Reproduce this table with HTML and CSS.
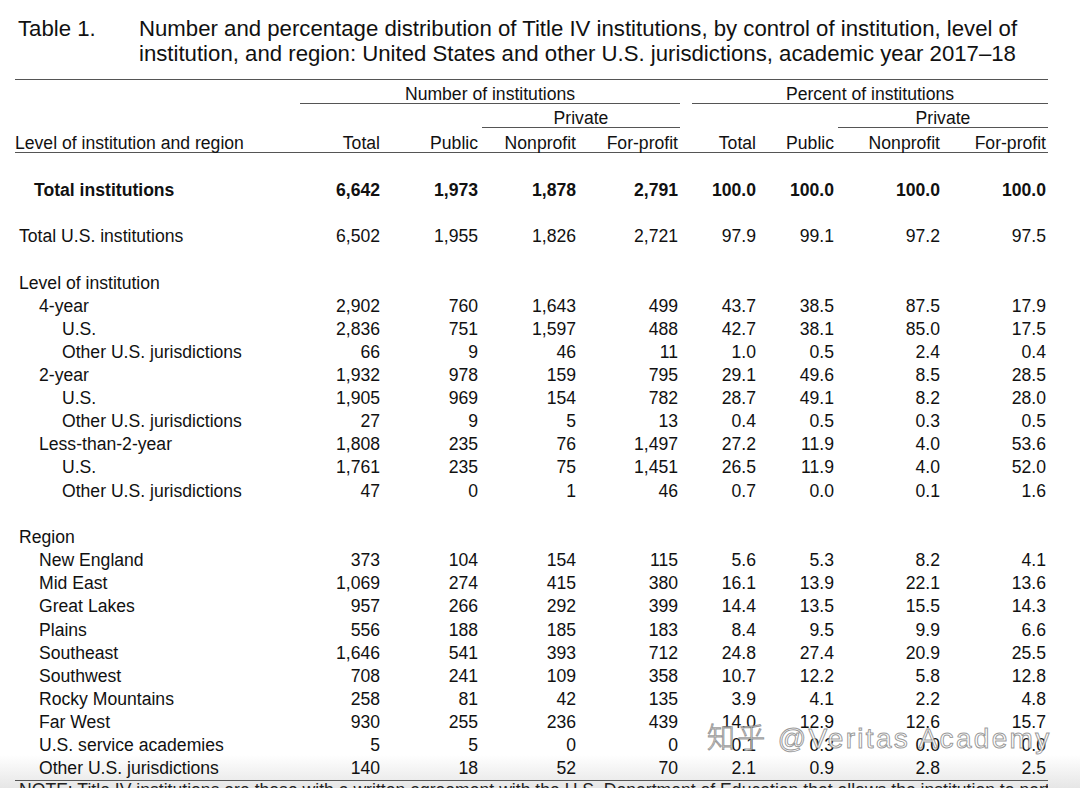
FILE: index.html
```html
<!DOCTYPE html>
<html lang="en">
<head>
<meta charset="utf-8">
<title>Table 1</title>
<link rel="stylesheet" href="styles.css">
</head>
<body>
<div class="page">
  <div class="title">
    <div class="title-num">Table 1.</div>
    <div class="title-text">Number and percentage distribution of Title IV institutions, by control of institution, level of institution, and region: United States and other U.S. jurisdictions, academic year 2017–18</div>
  </div>

  <div class="table">
    <div class="head">
      <div class="span span-num">Number of institutions</div>
      <div class="span span-pct">Percent of institutions</div>
      <div class="span span-priv1">Private</div>
      <div class="span span-priv2">Private</div>
      <div class="hl hl-label">Level of institution and region</div>
      <div class="hl">Total</div>
      <div class="hl">Public</div>
      <div class="hl">Nonprofit</div>
      <div class="hl">For-profit</div>
      <div class="hl">Total</div>
      <div class="hl">Public</div>
      <div class="hl">Nonprofit</div>
      <div class="hl">For-profit</div>
    </div>

    <div class="body">
      <div class="row bold first"><div class="lbl in-bold">Total institutions</div><div>6,642</div><div>1,973</div><div>1,878</div><div>2,791</div><div>100.0</div><div>100.0</div><div>100.0</div><div>100.0</div></div>
      <div class="row gap"><div class="lbl in-0">Total U.S. institutions</div><div>6,502</div><div>1,955</div><div>1,826</div><div>2,721</div><div>97.9</div><div>99.1</div><div>97.2</div><div>97.5</div></div>

      <div class="row gap"><div class="lbl in-0">Level of institution</div></div>
      <div class="row"><div class="lbl in-1">4-year</div><div>2,902</div><div>760</div><div>1,643</div><div>499</div><div>43.7</div><div>38.5</div><div>87.5</div><div>17.9</div></div>
      <div class="row"><div class="lbl in-2">U.S.</div><div>2,836</div><div>751</div><div>1,597</div><div>488</div><div>42.7</div><div>38.1</div><div>85.0</div><div>17.5</div></div>
      <div class="row"><div class="lbl in-2">Other U.S. jurisdictions</div><div>66</div><div>9</div><div>46</div><div>11</div><div>1.0</div><div>0.5</div><div>2.4</div><div>0.4</div></div>
      <div class="row"><div class="lbl in-1">2-year</div><div>1,932</div><div>978</div><div>159</div><div>795</div><div>29.1</div><div>49.6</div><div>8.5</div><div>28.5</div></div>
      <div class="row"><div class="lbl in-2">U.S.</div><div>1,905</div><div>969</div><div>154</div><div>782</div><div>28.7</div><div>49.1</div><div>8.2</div><div>28.0</div></div>
      <div class="row"><div class="lbl in-2">Other U.S. jurisdictions</div><div>27</div><div>9</div><div>5</div><div>13</div><div>0.4</div><div>0.5</div><div>0.3</div><div>0.5</div></div>
      <div class="row"><div class="lbl in-1">Less-than-2-year</div><div>1,808</div><div>235</div><div>76</div><div>1,497</div><div>27.2</div><div>11.9</div><div>4.0</div><div>53.6</div></div>
      <div class="row"><div class="lbl in-2">U.S.</div><div>1,761</div><div>235</div><div>75</div><div>1,451</div><div>26.5</div><div>11.9</div><div>4.0</div><div>52.0</div></div>
      <div class="row"><div class="lbl in-2">Other U.S. jurisdictions</div><div>47</div><div>0</div><div>1</div><div>46</div><div>0.7</div><div>0.0</div><div>0.1</div><div>1.6</div></div>

      <div class="row gap"><div class="lbl in-0">Region</div></div>
      <div class="row"><div class="lbl in-1">New England</div><div>373</div><div>104</div><div>154</div><div>115</div><div>5.6</div><div>5.3</div><div>8.2</div><div>4.1</div></div>
      <div class="row"><div class="lbl in-1">Mid East</div><div>1,069</div><div>274</div><div>415</div><div>380</div><div>16.1</div><div>13.9</div><div>22.1</div><div>13.6</div></div>
      <div class="row"><div class="lbl in-1">Great Lakes</div><div>957</div><div>266</div><div>292</div><div>399</div><div>14.4</div><div>13.5</div><div>15.5</div><div>14.3</div></div>
      <div class="row"><div class="lbl in-1">Plains</div><div>556</div><div>188</div><div>185</div><div>183</div><div>8.4</div><div>9.5</div><div>9.9</div><div>6.6</div></div>
      <div class="row"><div class="lbl in-1">Southeast</div><div>1,646</div><div>541</div><div>393</div><div>712</div><div>24.8</div><div>27.4</div><div>20.9</div><div>25.5</div></div>
      <div class="row"><div class="lbl in-1">Southwest</div><div>708</div><div>241</div><div>109</div><div>358</div><div>10.7</div><div>12.2</div><div>5.8</div><div>12.8</div></div>
      <div class="row"><div class="lbl in-1">Rocky Mountains</div><div>258</div><div>81</div><div>42</div><div>135</div><div>3.9</div><div>4.1</div><div>2.2</div><div>4.8</div></div>
      <div class="row"><div class="lbl in-1">Far West</div><div>930</div><div>255</div><div>236</div><div>439</div><div>14.0</div><div>12.9</div><div>12.6</div><div>15.7</div></div>
      <div class="row"><div class="lbl in-1">U.S. service academies</div><div>5</div><div>5</div><div>0</div><div>0</div><div>0.1</div><div>0.3</div><div>0.0</div><div>0.0</div></div>
      <div class="row"><div class="lbl in-1">Other U.S. jurisdictions</div><div>140</div><div>18</div><div>52</div><div>70</div><div>2.1</div><div>0.9</div><div>2.8</div><div>2.5</div></div>
    </div>
  </div>

  <div class="note">NOTE: Title IV institutions are those with a written agreement with the U.S. Department of Education that allows the institution to participate in any of the Title IV federal student financial assistance programs.</div>

  <div class="watermark"><span class="wm-cjk">知乎</span> @Veritas Academy</div>
</div>
</body>
</html>
```

FILE: styles.css
```css
html, body {
  margin: 0;
  padding: 0;
}
body {
  width: 1080px;
  height: 788px;
  overflow: hidden;
  background: linear-gradient(to bottom, #ffffff 0, #ffffff 755px, #e6e6e6 788px);
  font-family: "Liberation Sans", Arial, sans-serif;
  color: #111;
}
.page {
  position: relative;
  padding: 0 0 0 15px;
  width: 1033px;
}

/* Title */
.title {
  display: flex;
  padding-top: 16px;
  font-size: 22.2px;
  line-height: 25px;
}
.title-num {
  width: 124px;
  flex: none;
  padding-left: 3px;
  box-sizing: border-box;
}
.title-text {
  flex: 1;
  padding-right: 20px;
}

/* Table */
.table {
  margin-top: 13px;
  font-size: 17.6px;
}
.head,
.row {
  display: grid;
  grid-template-columns: 285px 82px 98px 98px 102px 78px 78px 106px 106px;
}
.head {
  grid-template-rows: 24px 24px 24px;
  border-top: 1px solid #555;
  border-bottom: 1px solid #555;
}
.span {
  text-align: center;
  border-bottom: 1px solid #555;
  padding-top: 5px;
  line-height: 18px;
  white-space: nowrap;
}
.span-num { grid-row: 1; grid-column: 2 / 6; }
.span-pct { grid-row: 1; grid-column: 6 / 10; margin-left: 12px; }
.span-priv1 { grid-row: 2; grid-column: 4 / 6; margin-left: 2px; }
.span-priv2 { grid-row: 2; grid-column: 8 / 10; margin-left: 2px; }
.hl {
  grid-row: 3;
  text-align: right;
  padding-right: 2px;
  padding-top: 5.5px;
  line-height: 18px;
  white-space: nowrap;
}
.hl-label {
  text-align: left;
  padding-left: 0;
}

.body {
  padding-top: 25.5px;
  border-bottom: 1px solid #555;
}
.row {
  height: 23.1px;
  line-height: 23.1px;
}
.row > div {
  text-align: right;
  padding-right: 2px;
  white-space: nowrap;
}
.row > .lbl {
  text-align: left;
  padding-right: 0;
}
.row.gap {
  margin-top: 23.5px;
}
.bold {
  font-weight: bold;
}
.in-bold { padding-left: 19px; }
.in-0 { padding-left: 4px; }
.in-1 { padding-left: 24px; }
.in-2 { padding-left: 47px; }

/* Note */
.note {
  font-size: 17.6px;
  line-height: 17px;
  padding-top: 1px;
  padding-left: 4px;
  white-space: nowrap;
  overflow: hidden;
  color: #222;
}

/* Watermark overlay */
.watermark {
  position: absolute;
  left: 707px;
  top: 719px;
  font-family: "Liberation Sans", "Noto Sans CJK SC", sans-serif;
  font-size: 28px;
  letter-spacing: 2.3px;
  line-height: 34px;
  color: rgba(255, 255, 255, 0.85);
  -webkit-text-stroke: 1px rgba(110, 110, 110, 0.7);
  white-space: nowrap;
}
.wm-cjk {
  font-family: "Noto Sans CJK SC", sans-serif;
  font-weight: 300;
}
```
